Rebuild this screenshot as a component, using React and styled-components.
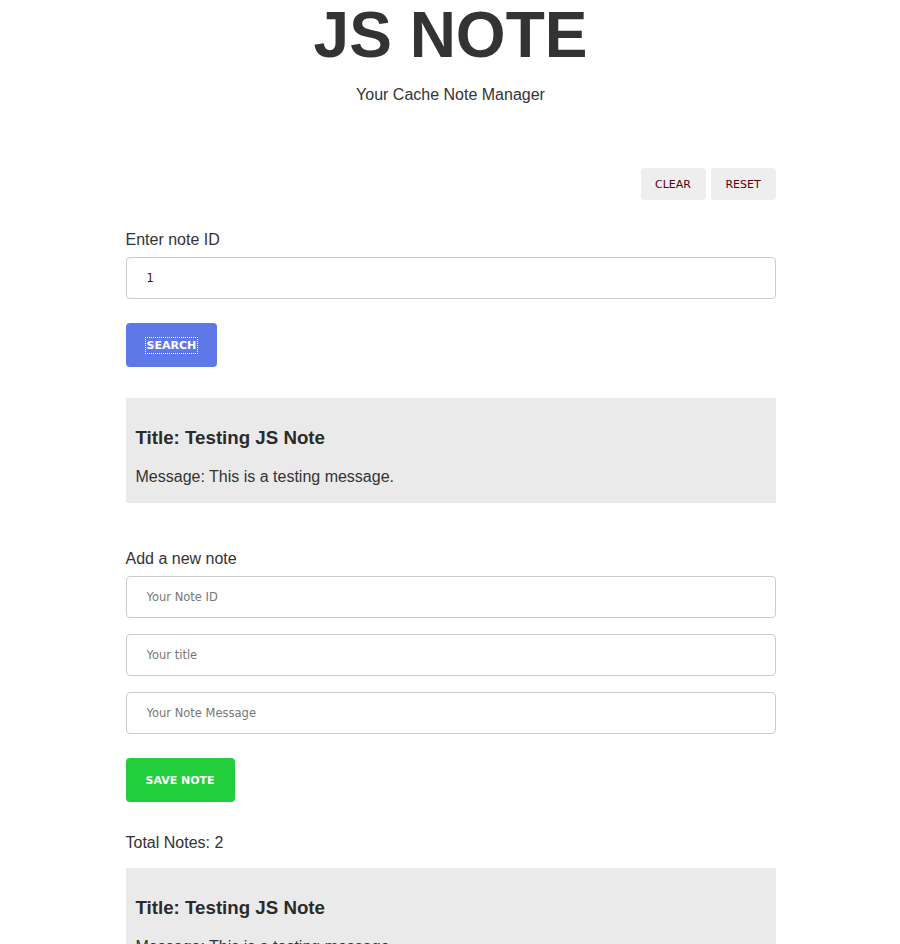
import React, { Component } from 'react'
import styled, { createGlobalStyle } from 'styled-components'

const GlobalStyle = createGlobalStyle`
  body {
    margin: 0;
    background: #fff;
    color: #333;
    font-family: "Liberation Sans", Arial, sans-serif;
    font-size: 16px;
  }
`

export default class App extends Component {
  state = {
    noteId: '1',
    notes: [
      { id: 1, title: 'Testing JS Note', message: 'This is a testing message.' },
      { id: 2, title: 'Testing JS Note', message: 'This is a testing message.' }
    ]
  }
  render() {
    const { noteId, notes } = this.state
    return (
      <Wrapper>
        <GlobalStyle />
        <Header>
          <h1>JS NOTE</h1>
          <p>Your Cache Note Manager</p>
        </Header>
        <Toolbar>
          <SmallButton>CLEAR</SmallButton>
          <SmallButton>RESET</SmallButton>
        </Toolbar>
        <Label>Enter note ID</Label>
        <Input defaultValue={noteId} />
        <ActionButton color="#5f78e8" pad="21px">
          <span className="focus">SEARCH</span>
        </ActionButton>
        <NoteCard>
          <h3>Title: {notes[0].title}</h3>
          <p>Message: {notes[0].message}</p>
        </NoteCard>
        <Label top="47px">Add a new note</Label>
        <Fields>
          <Input placeholder="Your Note ID" />
          <Input placeholder="Your title" />
          <Input placeholder="Your Note Message" />
        </Fields>
        <ActionButton color="#22ce3c" pad="20px">SAVE NOTE</ActionButton>
        <Total>Total Notes: {notes.length}</Total>
        {notes.map(note => (
          <NoteCard key={note.id} spaced>
            <h3>Title: {note.title}</h3>
            <p>Message: {note.message}</p>
          </NoteCard>
        ))}
      </Wrapper>
    )
  }
}

const Wrapper = styled.div`
  width: 650px;
  margin: 0 auto;
  padding-left: 1px;
  display: flex;
  flex-direction: column;
  align-items: stretch;
`

const Header = styled.header`
  text-align: center;
  h1 {
    margin: 3px 0 0;
    font-size: 64px;
    line-height: 64px;
    font-weight: bold;
    color: #333;
  }
  p {
    margin: 19px 0 0;
    line-height: 18px;
    font-size: 16px;
  }
`

const Toolbar = styled.div`
  display: flex;
  justify-content: flex-end;
  gap: 5px;
  margin-top: 64px;
`

const SmallButton = styled.button`
  width: 65px;
  height: 32px;
  border: none;
  border-radius: 4px;
  background: #eeeeee;
  color: #5a0010;
  font-family: "DejaVu Sans", Verdana, sans-serif;
  font-size: 11px;
  padding: 1px 0 0;
`

const Label = styled.label`
  display: block;
  margin-top: ${props => props.top || '31px'};
  line-height: 18px;
  margin-bottom: 8px;
  color: #333;
`

const Fields = styled.div`
  display: flex;
  flex-direction: column;
  gap: 16px;
`

const Input = styled.input`
  box-sizing: border-box;
  width: 100%;
  height: 42px;
  border: 1px solid #cccccc;
  border-radius: 4px;
  padding: 0 20px;
  font-family: "DejaVu Sans", Verdana, sans-serif;
  font-size: 11.5px;
  color: #5a0010;
  outline: none;
  &::placeholder {
    color: #777;
  }
`

const ActionButton = styled.button`
  align-self: flex-start;
  margin-top: 24px;
  height: 44px;
  padding: 0 ${props => props.pad};
  border: none;
  border-radius: 4px;
  background: ${props => props.color};
  color: #fff;
  font-family: "DejaVu Sans", Verdana, sans-serif;
  font-weight: bold;
  font-size: 11px;
  .focus {
    outline: 1px dotted #fff;
    outline-offset: 1px;
  }
`

const NoteCard = styled.div`
  background: #eaeaea;
  padding: 10px 10px 1px;
  margin-top: ${props => (props.spaced ? '16px' : '31px')};
  h3 {
    margin: 18.72px 0 19.72px;
    font-size: 18.72px;
    line-height: 21.5px;
    font-weight: bold;
    color: #2b2b2b;
  }
  p {
    margin: 16px 0;
    line-height: 18.4px;
  }
`

const Total = styled.div`
  margin-top: 32px;
  line-height: 18px;
`
